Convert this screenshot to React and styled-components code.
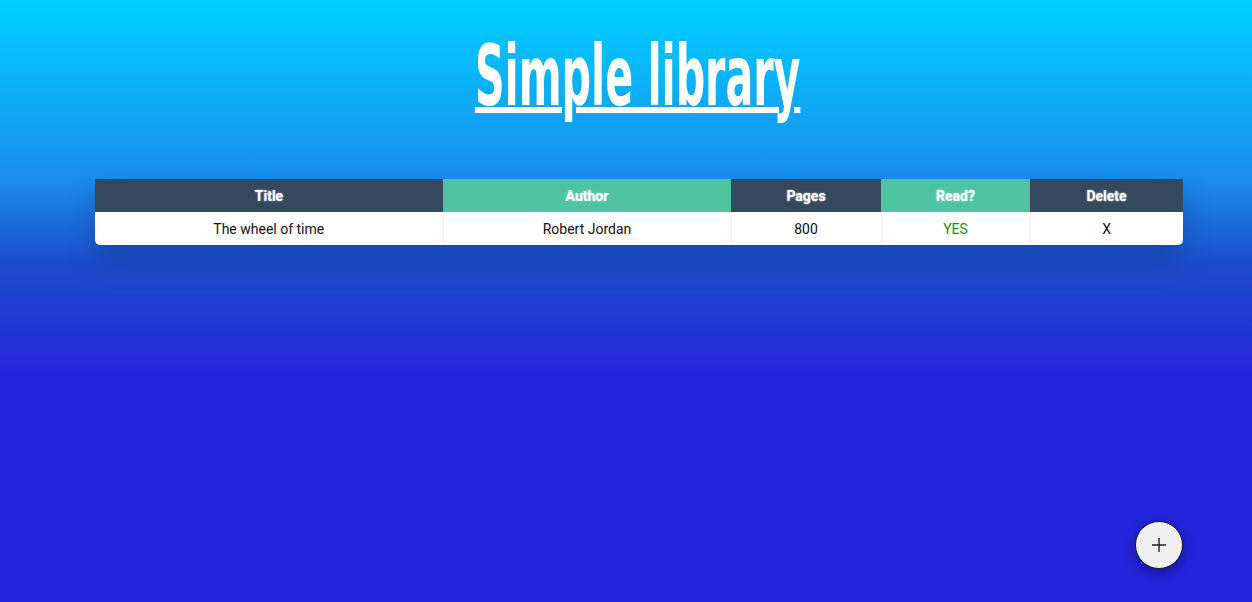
import React from "react";
import styled, { createGlobalStyle } from "styled-components";

const Global = createGlobalStyle`
  html, body { margin: 0; padding: 0; }
  body {
    min-height: 602px;
    font-family: Roboto, "Noto Sans", sans-serif;
    background: linear-gradient(180deg, #00d0ff 0px, #1a8ded 180px, #1b4ccb 265px, #2424dc 380px, #2424dc 100%);
    background-repeat: no-repeat;
    background-color: #2424dc;
  }
`;

const Page = styled.div`
  height: 602px;
  display: flex;
  flex-direction: column;
  position: relative;
  overflow: hidden;
`;

const Heading = styled.h1`
  margin: 28px 0 0;
  padding-left: 24px;
  text-align: center;
  font-family: "DejaVu Sans Condensed", "DejaVu Sans", sans-serif;
  font-weight: 700;
  font-size: 84px;
  line-height: 96px;
  height: 96px;
  color: #fff;
`;

const HeadingText = styled.span`
  display: inline-block;
  transform: scaleX(0.545);
  transform-origin: center;
  text-decoration: underline;
  text-decoration-thickness: 6px;
  text-underline-offset: 2px;
  text-decoration-skip-ink: auto;
`;

const TableWrap = styled.div`
  margin: 55px 0 0 95px;
  width: 1088px;
  border-radius: 0 0 5px 5px;
  overflow: hidden;
  box-shadow: 0 14px 30px rgba(0, 0, 40, 0.22);
`;

const Table = styled.table`
  width: 100%;
  border-collapse: collapse;
  table-layout: fixed;
  font-size: 14px;
`;

const Th = styled.th`
  height: 33px;
  padding: 0;
  background: ${(p) => (p.$green ? "#4fc3a1" : "#34495e")};
  color: #fff;
  font-weight: 700;
  font-size: 14px;
  text-shadow: 0 0 2px rgba(255, 255, 255, 0.7);
`;

const Td = styled.td`
  height: 33px;
  padding: 0;
  background: #fff;
  text-align: center;
  color: ${(p) => (p.$green ? "#1e8a1e" : "#111")};
  border-left: 1px solid #f0f0f0;
  &:first-child { border-left: none; }
`;

const Fab = styled.button`
  position: absolute;
  left: 1135px;
  top: 521px;
  width: 48px;
  height: 48px;
  border-radius: 50%;
  background: #efefef;
  border: 1px solid #1a1a2a;
  box-shadow: 0 4px 12px rgba(0, 0, 40, 0.45);
  display: flex;
  align-items: center;
  justify-content: center;
  padding: 0;
  cursor: pointer;
`;

const cols = [348, 288, 150, 149, 153];

export default function App() {
  return (
    <Page>
      <Global />
      <Heading>
        <HeadingText>Simple library</HeadingText>
      </Heading>
      <TableWrap>
        <Table>
          <colgroup>
            {cols.map((w, i) => (
              <col key={i} style={{ width: w }} />
            ))}
          </colgroup>
          <thead>
            <tr>
              <Th>Title</Th>
              <Th $green>Author</Th>
              <Th>Pages</Th>
              <Th $green>Read?</Th>
              <Th>Delete</Th>
            </tr>
          </thead>
          <tbody>
            <tr>
              <Td>The wheel of time</Td>
              <Td>Robert Jordan</Td>
              <Td>800</Td>
              <Td $green>YES</Td>
              <Td>X</Td>
            </tr>
          </tbody>
        </Table>
      </TableWrap>
      <Fab aria-label="Add book">
        <svg width="18" height="18" viewBox="0 0 18 18">
          <path d="M9 2v14M2 9h14" stroke="#222" strokeWidth="1.4" />
        </svg>
      </Fab>
    </Page>
  );
}
